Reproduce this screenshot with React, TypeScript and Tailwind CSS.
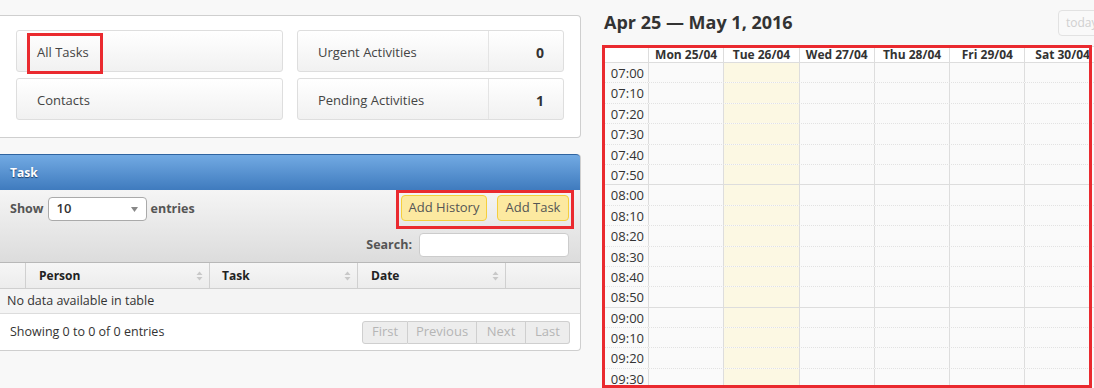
const days = ["Mon 25/04", "Tue 26/04", "Wed 27/04", "Thu 28/04", "Fri 29/04", "Sat 30/04", "Sun 01/05"];
const times = ["07:00", "07:10", "07:20", "07:30", "07:40", "07:50", "08:00", "08:10", "08:20", "08:30", "08:40", "08:50", "09:00", "09:10", "09:20", "09:30"];

function SortIcon() {
  return (
    <svg width="7" height="10" viewBox="0 0 7 10" className="shrink-0">
      <path d="M3.5 0.5 L6.5 4 L0.5 4 Z" fill="#c8c8c8" />
      <path d="M3.5 9.5 L6.5 6 L0.5 6 Z" fill="#c8c8c8" />
    </svg>
  );
}

function StatButton({ label, count }: { label: string; count?: string }) {
  return (
    <div className="flex h-[42px] items-center rounded-[3px] border border-[#dedede] bg-gradient-to-b from-white to-[#f1f1f1] text-[13px] text-[#444]">
      <span className="flex-1 pt-[3px] pl-[20px]">{label}</span>
      {count !== undefined && (
        <span className="flex h-full w-[75px] items-center justify-end border-l border-[#e4e4e4] pt-[3px] pr-[19px] text-[14px] font-bold text-[#333]">
          {count}
        </span>
      )}
    </div>
  );
}

function Calendar() {
  return (
    <div className="relative mt-[11px] w-[580px] border-t border-l border-[#ddd] bg-[#fafafa]">
      {/* header */}
      <div className="flex h-[16px] border-b border-[#ddd] bg-white">
        <div className="w-[43px] shrink-0" />
        {days.map((d) => (
          <div
            key={d}
            className="w-[75.3px] shrink-0 border-l border-[#ddd] pt-[1px] text-center text-[12px] font-bold leading-[14px] text-[#333]"
          >
            {d}
          </div>
        ))}
      </div>
      {times.map((t, i) => (
        <div
          key={t}
          className={
            "flex h-[20.4px] " +
            (i % 6 === 5 ? "border-b border-solid border-[#ddd]" : "border-b border-dotted border-[#e2e2e2]")
          }
        >
          <div className="w-[43px] shrink-0 pr-[4px] text-right text-[13px] leading-[20px] text-[#333]">{t}</div>
          {days.map((d, j) => (
            <div
              key={d}
              className={"w-[75.3px] shrink-0 border-l border-[#ddd] " + (j === 1 ? "bg-[#fcf8e3]" : "")}
            />
          ))}
        </div>
      ))}
    </div>
  );
}

export default function App() {
  return (
    <div
      className="relative flex h-[388px] w-[1094px] overflow-hidden bg-[#f8f8f8]"
      style={{ fontFamily: '"Open Sans", "Noto Sans", sans-serif' }}
    >
      {/* Left column */}
      <div className="flex w-[581px] shrink-0 flex-col pt-[15px]">
        <div className="h-[123px] rounded-r-[4px] border border-l-0 border-[#cfcfcf] bg-white pt-[14px] pr-[16px] pl-[16px]">
          <div className="grid grid-cols-2 gap-x-[14px] gap-y-[6px]">
            <StatButton label="All Tasks" />
            <StatButton label="Urgent Activities" count="0" />
            <StatButton label="Contacts" />
            <StatButton label="Pending Activities" count="1" />
          </div>
        </div>

        <div className="mt-[16px] rounded-tr-[4px] rounded-br-[4px] border-r border-b border-[#cfcfcf] bg-white">
          <div className="flex h-[36px] items-center rounded-tr-[4px] border-t border-[#2f64a0] bg-gradient-to-b from-[#72aae3] to-[#3f7bbe] pl-[10px] text-[12px] font-bold text-white [text-shadow:0_1px_1px_#1d3f66]">
            Task
          </div>
          <div className="relative h-[72px] bg-gradient-to-b from-[#f5f5f5] to-[#dcdcdc]">
            <div className="absolute top-[7px] left-[10px] flex items-center gap-[4px] text-[12.5px] font-bold text-[#555]">
              <span>Show</span>
              <div className="flex h-[24px] w-[99px] items-center justify-between rounded-[4px] border border-[#aaa] bg-white pr-[8px] pl-[8px] text-[13px] font-semibold text-[#333]">
                <span>10</span>
                <svg width="7" height="5" viewBox="0 0 7 5">
                  <path d="M0 0 L7 0 L3.5 5 Z" fill="#888" />
                </svg>
              </div>
              <span>entries</span>
            </div>
            <div className="absolute top-[5px] right-[11px] flex gap-[10px] text-[13px] text-[#555]">
              <div className="flex h-[26px] w-[86px] items-center justify-center rounded-[4px] border border-[#f5cf3d] bg-[#fce9a0]">
                Add History
              </div>
              <div className="flex h-[26px] w-[72px] items-center justify-center rounded-[4px] border border-[#f5cf3d] bg-[#fce9a0]">
                Add Task
              </div>
            </div>
            <div className="absolute top-[43px] right-[11px] flex items-center gap-[7px] text-[12.5px] font-bold text-[#555]">
              <span>Search:</span>
              <div className="h-[24px] w-[150px] rounded-[4px] border border-[#ccc] bg-white" />
            </div>
          </div>
          <div className="flex h-[27px] items-center border-t border-b border-[#b8b8b8] border-b-[#cfcfcf] bg-gradient-to-b from-[#f6f6f6] to-[#ececec] text-[12px] font-bold text-[#222]">
            <div className="h-full w-[26px] border-r border-[#d0d0d0]" />
            <div className="flex h-full w-[184px] items-center justify-between border-r border-[#d0d0d0] pr-[6px] pl-[13px]">
              <span>Person</span>
              <SortIcon />
            </div>
            <div className="flex h-full w-[148px] items-center justify-between border-r border-[#d0d0d0] pr-[6px] pl-[12px]">
              <span>Task</span>
              <SortIcon />
            </div>
            <div className="flex h-full w-[148px] items-center justify-between border-r border-[#d0d0d0] pr-[6px] pl-[13px]">
              <span>Date</span>
              <SortIcon />
            </div>
          </div>
          <div className="flex h-[25px] items-center border-b border-[#dcdcdc] bg-[#f4f4f4] pl-[7px] text-[12.5px] text-[#333]">
            No data available in table
          </div>
          <div className="flex h-[36px] items-center justify-between pr-[10px] pl-[10px] text-[12.5px] text-[#333]">
            <span>Showing 0 to 0 of 0 entries</span>
            <div className="flex h-[23px] text-[13px] text-[#b5b5b5]">
              <div className="flex w-[46px] items-center justify-center rounded-l-[3px] border border-[#cfcfcf] bg-[#ededed]">First</div>
              <div className="flex w-[69px] items-center justify-center border border-l-0 border-[#cfcfcf] bg-[#ededed]">Previous</div>
              <div className="flex w-[49px] items-center justify-center border border-l-0 border-[#cfcfcf] bg-[#ededed]">Next</div>
              <div className="flex w-[44px] items-center justify-center rounded-r-[3px] border border-l-0 border-[#cfcfcf] bg-[#ededed]">Last</div>
            </div>
          </div>
        </div>
      </div>

      {/* Calendar column */}
      <div className="ml-[23px] flex flex-col pt-[9px]">
        <div className="flex items-start justify-between">
          <h2 className="text-[18px] leading-[26px] font-bold text-[#333]">Apr 25 — May 1, 2016</h2>
        </div>
        <Calendar />
      </div>
      <div className="absolute top-[10px] left-[1058px] flex h-[26px] w-[50px] items-center rounded-[4px] border border-[#e2e2e2] bg-[#f9f9f9] pl-[7px] text-[12px] text-[#d0d0d0]">
        today
      </div>

      {/* annotation highlights */}
      <div className="pointer-events-none absolute top-[33px] left-[27px] h-[41px] w-[76px] border-[3px] border-[#ea2a2f]" />
      <div className="pointer-events-none absolute top-[190px] left-[396px] h-[39px] w-[178px] border-[3px] border-[#ea2a2f]" />
      <div className="pointer-events-none absolute top-[45px] left-[602px] h-[343px] w-[490px] border-[3px] border-[#ea2a2f]" />
    </div>
  );
}
